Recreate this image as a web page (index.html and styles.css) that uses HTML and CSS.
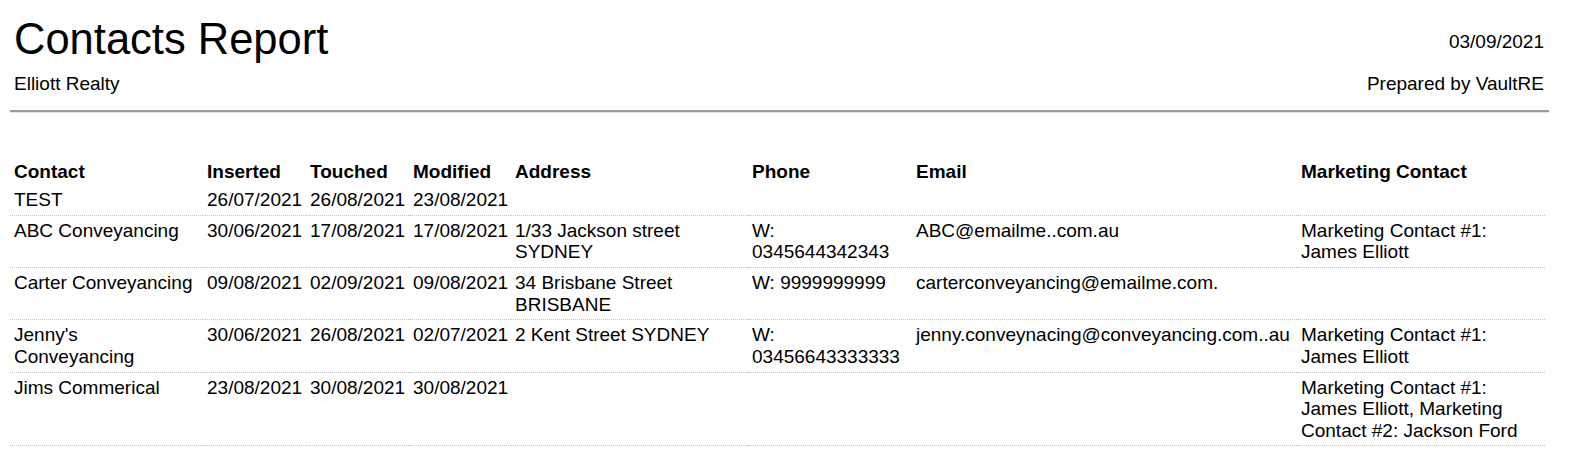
FILE: index.html
```html
<!DOCTYPE html>
<html lang="en">
<head>
<meta charset="utf-8">
<title>Contacts Report</title>
<link rel="stylesheet" href="styles.css">
</head>
<body>
<div class="page">
  <header class="report-header">
    <div class="header-left">
      <h1 class="title">Contacts Report</h1>
      <div class="subtitle">Elliott Realty</div>
    </div>
    <div class="header-right">
      <div class="date">03/09/2021</div>
      <div class="prepared">Prepared by VaultRE</div>
    </div>
  </header>
  <hr class="divider">
  <table class="report-table">
    <colgroup>
      <col class="c-contact">
      <col class="c-date">
      <col class="c-date">
      <col class="c-date2">
      <col class="c-address">
      <col class="c-phone">
      <col class="c-email">
      <col class="c-marketing">
    </colgroup>
    <thead>
      <tr>
        <th>Contact</th>
        <th>Inserted</th>
        <th>Touched</th>
        <th>Modified</th>
        <th>Address</th>
        <th>Phone</th>
        <th>Email</th>
        <th>Marketing Contact</th>
      </tr>
    </thead>
    <tbody>
      <tr>
        <td>TEST</td>
        <td>26/07/2021</td>
        <td>26/08/2021</td>
        <td>23/08/2021</td>
        <td></td>
        <td></td>
        <td></td>
        <td></td>
      </tr>
      <tr>
        <td>ABC Conveyancing</td>
        <td>30/06/2021</td>
        <td>17/08/2021</td>
        <td>17/08/2021</td>
        <td>1/33 Jackson street SYDNEY</td>
        <td>W: 0345644342343</td>
        <td>ABC@emailme..com.au</td>
        <td>Marketing Contact #1: James Elliott</td>
      </tr>
      <tr>
        <td>Carter Conveyancing</td>
        <td>09/08/2021</td>
        <td>02/09/2021</td>
        <td>09/08/2021</td>
        <td>34 Brisbane Street BRISBANE</td>
        <td>W: 9999999999</td>
        <td>carterconveyancing@emailme.com.</td>
        <td></td>
      </tr>
      <tr>
        <td>Jenny's Conveyancing</td>
        <td>30/06/2021</td>
        <td>26/08/2021</td>
        <td>02/07/2021</td>
        <td>2 Kent Street SYDNEY</td>
        <td>W: 03456643333333</td>
        <td>jenny.conveynacing@conveyancing.com..au</td>
        <td>Marketing Contact #1: James Elliott</td>
      </tr>
      <tr>
        <td>Jims Commerical</td>
        <td>23/08/2021</td>
        <td>30/08/2021</td>
        <td>30/08/2021</td>
        <td></td>
        <td></td>
        <td></td>
        <td>Marketing Contact #1: James Elliott, Marketing Contact #2: Jackson Ford</td>
      </tr>
    </tbody>
  </table>
</div>
</body>
</html>
```

FILE: styles.css
```css
* {
  box-sizing: border-box;
}

html, body {
  background: #ffffff;
}

body {
  margin: 0;
  font-family: "Liberation Sans", Arial, Helvetica, sans-serif;
  font-size: 19px;
  line-height: normal;
  color: #000000;
}

.page {
  width: 1539px;
  margin: 0 0 0 10px;
  padding-top: 15px;
}

.report-header {
  display: flex;
  justify-content: space-between;
  align-items: flex-start;
  padding: 0 5px 0 4px;
}

.header-left {
  display: flex;
  flex-direction: column;
}

.title {
  margin: 0;
  font-size: 43.5px;
  font-weight: normal;
  line-height: normal;
}

.subtitle {
  margin-top: 8.5px;
}

.header-right {
  display: flex;
  flex-direction: column;
  align-items: flex-end;
  padding-top: 16px;
}

.date {
  margin-bottom: 20px;
}

.divider {
  margin: 14.5px 0 0 0;
  height: 0;
  border: 0;
  border-top: 2px solid #9b9b9b;
  border-bottom: 1px solid #e6e6e6;
}

.report-table {
  margin-top: 44px;
  width: 1535px;
  table-layout: fixed;
  border-collapse: collapse;
}

.c-contact { width: 193px; }
.c-date { width: 103px; }
.c-date2 { width: 102px; }
.c-address { width: 237px; }
.c-phone { width: 164px; }
.c-email { width: 385px; }
.c-marketing { width: 248px; }

.report-table th,
.report-table td {
  text-align: left;
  vertical-align: top;
  font-size: 19px;
  line-height: 21.4px;
}

.report-table th {
  font-weight: bold;
  padding: 4px 4px 3px;
}

.report-table td {
  padding: 4px 4px 4.5px;
}

.report-table tbody td {
  border-bottom: 1px dotted #c4c4c4;
}
```
